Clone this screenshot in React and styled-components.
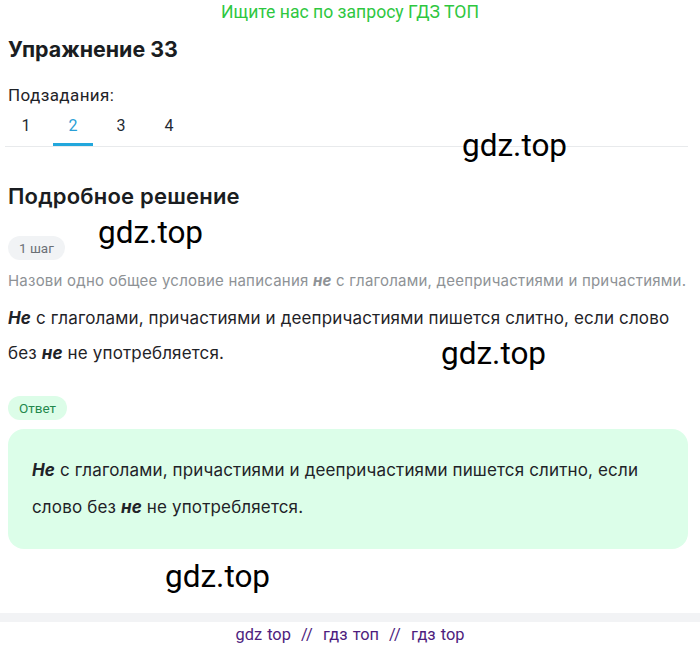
import React from "react";
import styled, { createGlobalStyle } from "styled-components";

const Global = createGlobalStyle`
  html, body { margin: 0; padding: 0; background: #fff; }
  body { font-family: Inter, "Noto Sans", sans-serif; color: #1c1f23; }
  * { box-sizing: border-box; }
`;

const Page = styled.div`
  position: relative;
  width: 700px;
  min-height: 650px;
  display: flex;
  flex-direction: column;
`;

const Banner = styled.div`
  height: 24px;
  line-height: 24px;
  text-align: center;
  font-family: Roboto, "Liberation Sans", sans-serif;
  font-size: 17.6px;
  color: #2ec73f;
`;

const Content = styled.main`
  padding: 0 12px 0 8px;
  display: flex;
  flex-direction: column;
`;

const Title = styled.h1`
  margin: 10px 0 0;
  font-size: 21.4px;
  line-height: 30px;
  font-weight: 700;
  color: #1a1d21;
`;

const Label = styled.div`
  margin-top: 20px;
  font-family: Roboto, "Liberation Sans", sans-serif;
  font-size: 17px;
  letter-spacing: 0.4px;
  line-height: 22px;
  color: #1f2328;
`;

const Tabs = styled.div`
  display: flex;
  gap: 8px;
  margin-left: -3px;
  border-bottom: 1px solid #e8eaec;
`;

const Tab = styled.div`
  position: relative;
  width: 40px;
  height: 40px;
  line-height: 40px;
  text-align: center;
  font-family: Roboto, "Liberation Sans", sans-serif;
  font-size: 16px;
  color: ${(p) => (p.$active ? "#2a9fd6" : "#1f2a33")};
  &::after {
    content: "";
    display: ${(p) => (p.$active ? "block" : "none")};
    position: absolute;
    left: 0;
    right: 0;
    bottom: 0;
    height: 3px;
    background: #22a7dc;
  }
  &:first-child {
    padding-left: 2px;
  }
`;

const Heading = styled.h2`
  margin: 35px 0 0;
  font-size: 22px;
  letter-spacing: 0.2px;
  line-height: 28px;
  font-weight: 600;
  color: #1a1d21;
`;

const Badge = styled.span`
  align-self: flex-start;
  height: 24px;
  line-height: 24px;
  padding: 0 11px;
  border-radius: 12px;
  font-family: Roboto, "Liberation Sans", sans-serif;
  font-size: 13.5px;
  margin-top: ${(p) => p.$mt}px;
  background: ${(p) => (p.$green ? "#dcfde8" : "#f1f3f5")};
  color: ${(p) => (p.$green ? "#23884c" : "#6b7075")};
`;

const Hint = styled.p`
  margin: 9px 0 0;
  font-size: 15px;
  letter-spacing: 0.22px;
  line-height: 24px;
  color: #8e9296;
  white-space: nowrap;
`;

const Text = styled.p`
  margin: 8px 0 0;
  font-size: 17px;
  letter-spacing: 0.15px;
  line-height: 35px;
  color: #1f2328;
`;

const AnswerBox = styled.div`
  margin-top: 9px;
  padding: 23px 24px;
  border-radius: 16px;
  background: #dcfee9;
  font-size: 17px;
  letter-spacing: 0.15px;
  line-height: 37px;
  color: #1f2328;
`;

const Em = styled.b`
  font-style: italic;
  font-weight: 700;
`;

const Spacer = styled.div`
  flex: 1;
`;

const FooterBand = styled.div`
  height: 9px;
  background: #f2f3f5;
`;

const Footer = styled.div`
  height: 28px;
  line-height: 26px;
  text-align: center;
  font-family: Roboto, "Liberation Sans", sans-serif;
  font-size: 16.4px;
  color: #4e1d7e;
  word-spacing: 1px;
`;

const Mark = styled.div`
  position: absolute;
  font-family: Roboto, "Liberation Sans", sans-serif;
  font-size: 31.5px;
  line-height: 30px;
  color: #000;
  pointer-events: none;
`;

const marks = [
  { x: 462, y: 131 },
  { x: 98, y: 218 },
  { x: 441, y: 339 },
  { x: 165, y: 562 },
];

export default function App() {
  return (
    <Page>
      <Global />
      <Banner>Ищите нас по запросу ГДЗ ТОП</Banner>
      <Content>
        <Title>Упражнение 33</Title>
        <Label>Подзадания:</Label>
        <Tabs>
          {[1, 2, 3, 4].map((n) => (
            <Tab key={n} $active={n === 2}>
              {n}
            </Tab>
          ))}
        </Tabs>
        <Heading>Подробное решение</Heading>
        <Badge $mt={26}>1 шаг</Badge>
        <Hint>
          Назови одно общее условие написания <Em>не</Em> с глаголами, деепричастиями и причастиями.
        </Hint>
        <Text>
          <Em>Не</Em> с глаголами, причастиями и деепричастиями пишется слитно, если слово без <Em>не</Em> не
          употребляется.
        </Text>
        <Badge $green $mt={25}>
          Ответ
        </Badge>
        <AnswerBox>
          <Em>Не</Em> с глаголами, причастиями и деепричастиями пишется слитно, если слово без <Em>не</Em> не
          употребляется.
        </AnswerBox>
      </Content>
      <Spacer />
      <FooterBand />
      <Footer>gdz top&nbsp; //&nbsp; гдз топ&nbsp; //&nbsp; гдз top</Footer>
      {marks.map((m, i) => (
        <Mark key={i} style={{ left: m.x, top: m.y }}>
          gdz.top
        </Mark>
      ))}
    </Page>
  );
}
